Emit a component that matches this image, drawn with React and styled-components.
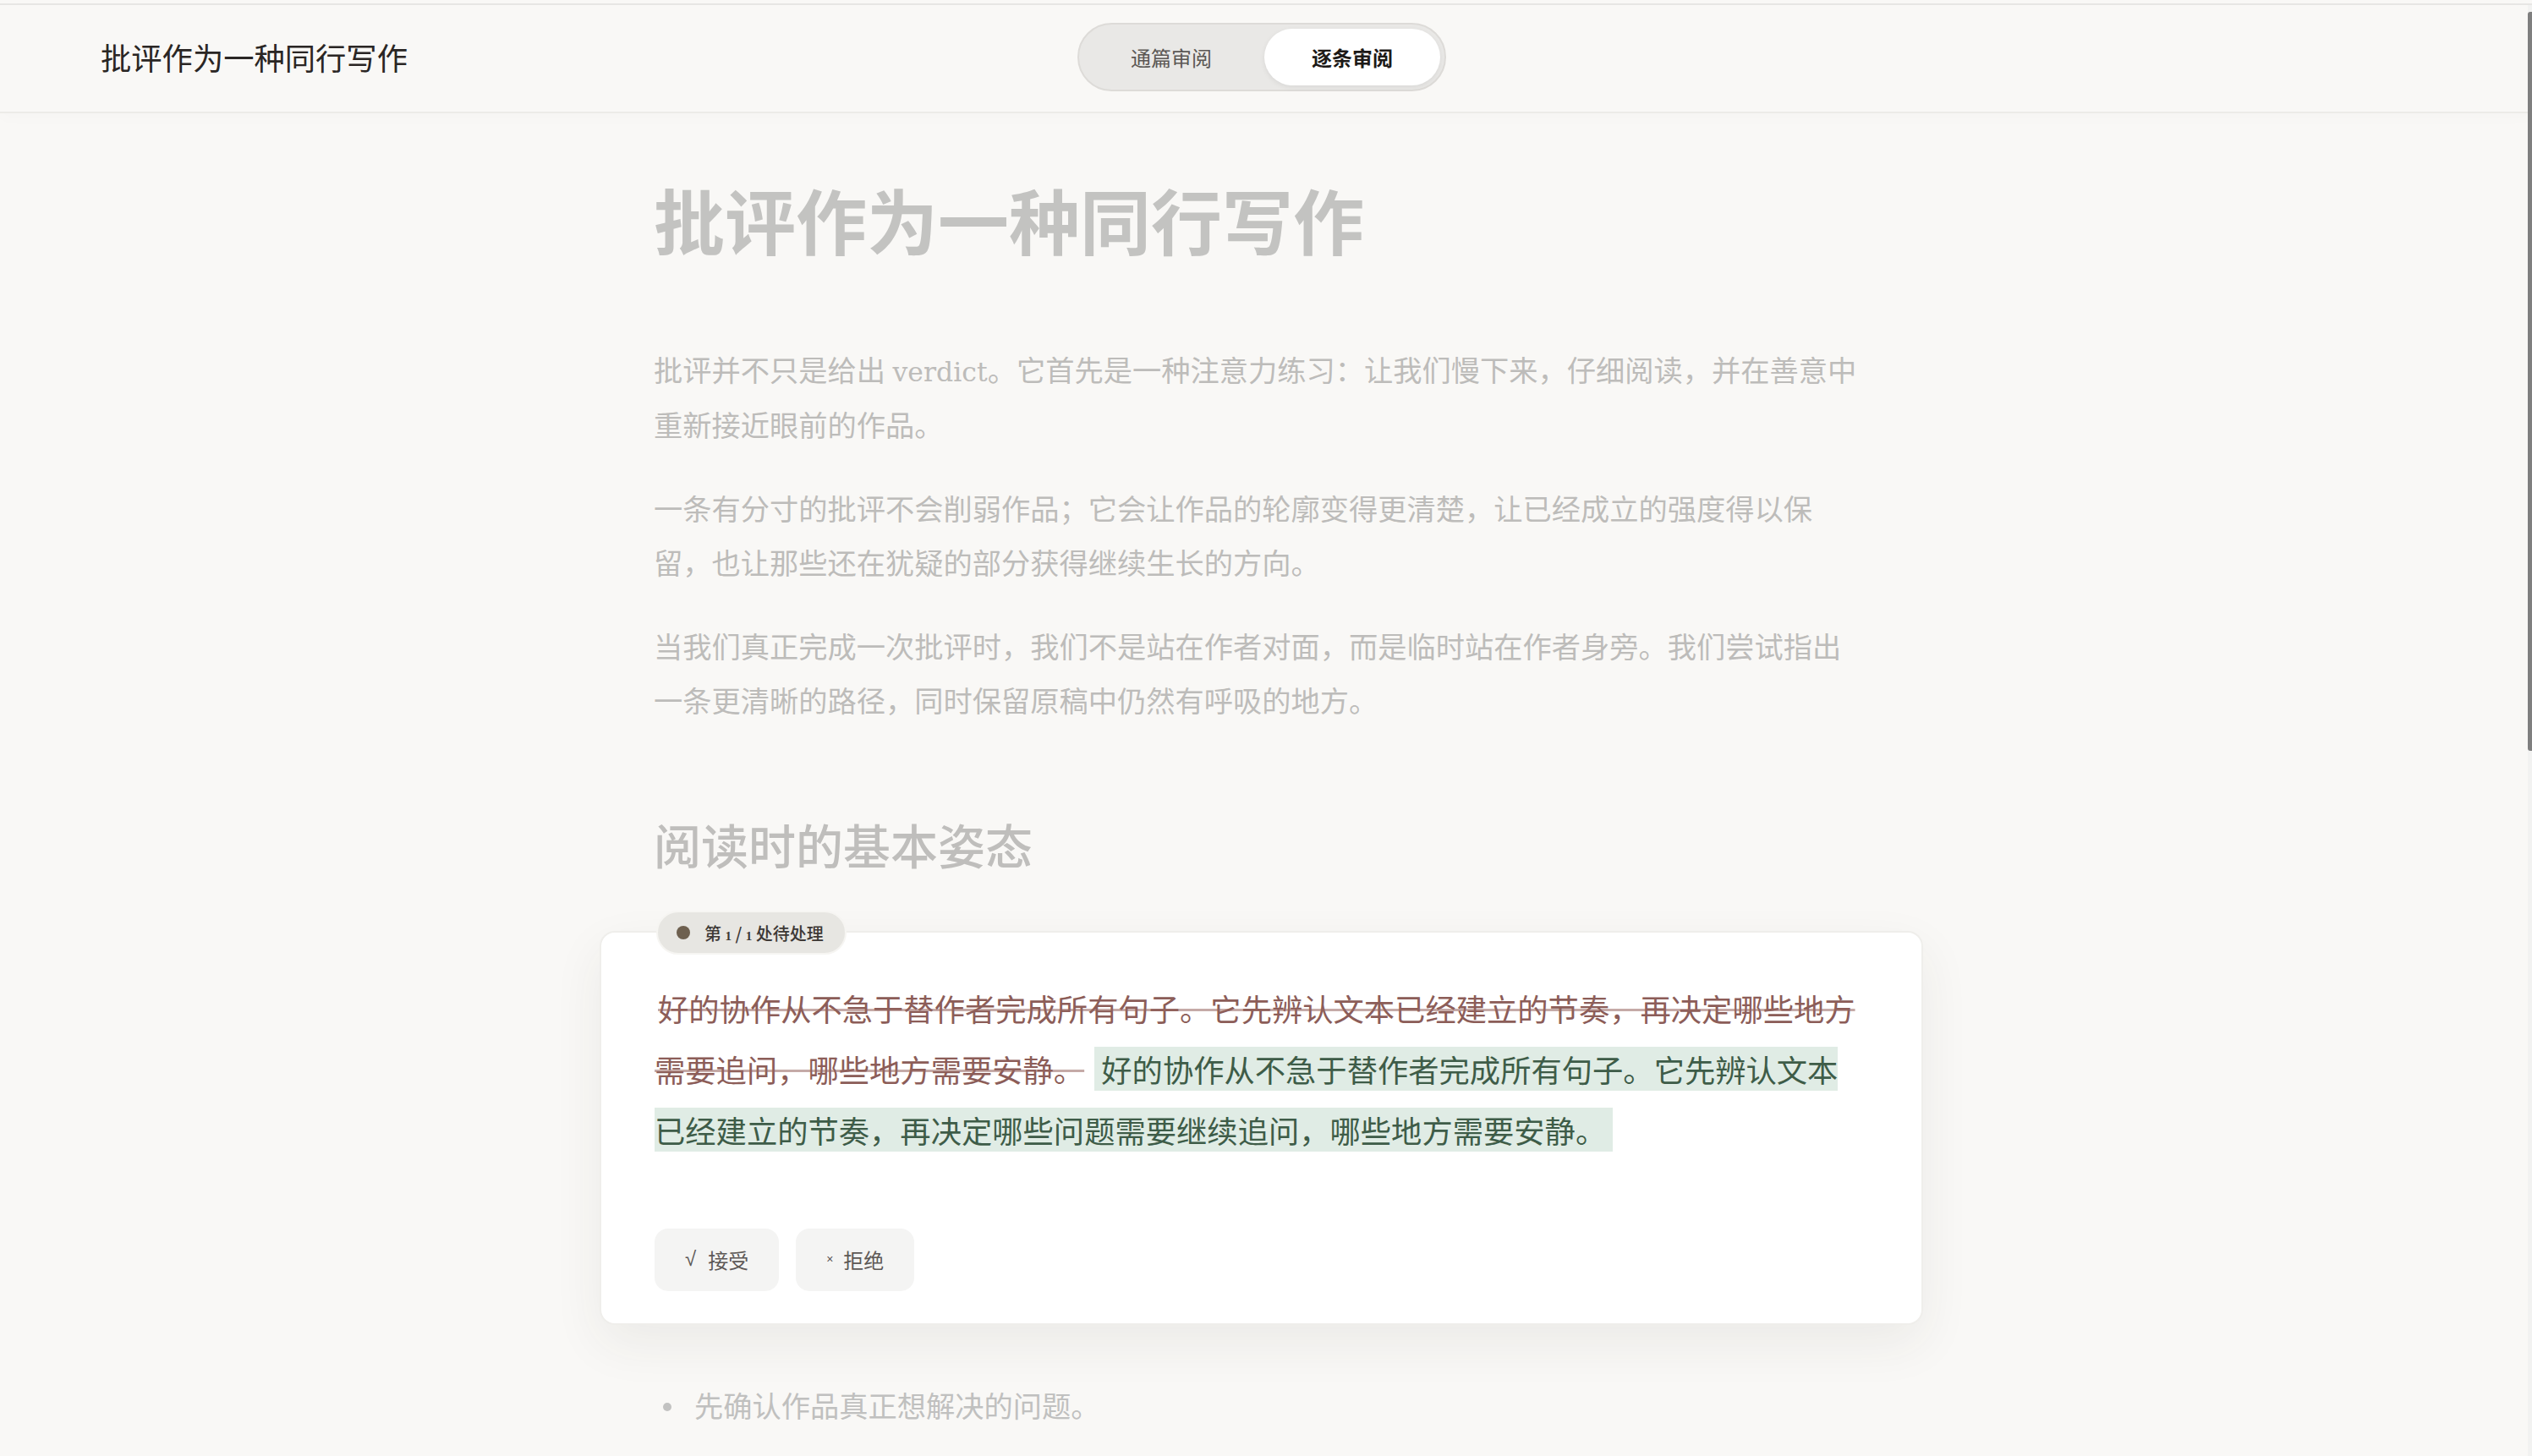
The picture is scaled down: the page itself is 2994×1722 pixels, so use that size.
import React from 'react';
import styled, { createGlobalStyle } from 'styled-components';

const GlobalStyle = createGlobalStyle`
  html, body {
    margin: 0;
    padding: 0;
    overflow: hidden;
    background: #f9f8f6;
  }
  * {
    box-sizing: border-box;
  }
`;

const serif = `"Liberation Serif", "Noto Sans CJK SC", serif`;
const sans = `"Noto Sans CJK SC", "Noto Sans", sans-serif`;

const Page = styled.div`
  height: 100vh;
  overflow: hidden;
  padding-top: 4px;
  background: #f9f8f6;
  font-family: ${serif};
`;

const Header = styled.header`
  display: grid;
  grid-template-columns: 1fr auto 1fr;
  align-items: center;
  height: 130px;
  padding: 0 10px 4px 0;
  border-top: 2px solid #e7e6e4;
  border-bottom: 2px solid #ecebe8;
  box-shadow: 0 6px 18px rgba(0, 0, 0, 0.015);
  background: #f9f8f6;
`;

const Brand = styled.div`
  padding-left: 119px;
  font-family: ${sans};
  font-size: 36.3px;
  color: #2a2624;
`;

const Toggle = styled.div`
  display: flex;
  gap: 6px;
  padding: 5px;
  border: 2px solid #dddbd8;
  border-radius: 42px;
  background: #e9e8e6;
`;

const Segment = styled.button`
  width: 208px;
  height: 67px;
  border: none;
  border-radius: 34px;
  font-family: ${sans};
  font-size: 24px;
  font-weight: ${(p) => (p.$active ? 700 : 400)};
  color: ${(p) => (p.$active ? '#1d1a18' : '#5b5754')};
  background: ${(p) => (p.$active ? '#ffffff' : 'transparent')};
  box-shadow: ${(p) => (p.$active ? '0 2px 6px rgba(0, 0, 0, 0.07)' : 'none')};
  cursor: pointer;
`;

const Main = styled.main`
  padding: 72px 14px 0 0;
`;

const Column = styled.article`
  width: 1434px;
  margin: 0 auto;
`;

const Title = styled.h1`
  margin: 0 0 96px;
  font-family: ${sans};
  font-size: 84px;
  line-height: 105px;
  font-weight: 700;
  color: #c3c3c1;
`;

const Para = styled.p`
  margin: 0;
  font-size: 34.25px;
  line-height: 64px;
  color: #bdbcba;

  & + & {
    margin-top: 35px;
  }
`;

const Latin = styled.span`
  font-family: "DejaVu Serif", serif;
  font-size: 31.5px;
`;

const SectionTitle = styled.h2`
  margin: 97px 0 0;
  font-family: ${sans};
  font-size: 56px;
  line-height: 78px;
  font-weight: 500;
  color: #bfbebc;
`;

const Card = styled.section`
  position: relative;
  margin: 64px -67px 0 -64px;
  padding: 53px 70px 38px 63px;
  border: 2px solid #efeeeb;
  border-radius: 18px;
  background: #ffffff;
  box-shadow: 0 22px 60px rgba(60, 50, 40, 0.07);
`;

const Badge = styled.div`
  position: absolute;
  top: -26px;
  left: 65px;
  display: flex;
  align-items: center;
  gap: 17px;
  height: 52px;
  padding: 0 25px 0 22px;
  border: 2px solid #f6f5f2;
  border-radius: 26px;
  background: #e7e6e2;
  font-family: ${sans};
  font-size: 20px;
  font-weight: 500;
  color: #3d3835;
`;

const Dot = styled.span`
  width: 16px;
  height: 16px;
  border-radius: 50%;
  background: #6e604f;
`;

const Num = styled.span`
  font-family: "Liberation Serif", serif;
  font-size: 15px;
  font-weight: 700;
`;

const Edit = styled.p`
  margin: 0;
  font-family: ${sans};
  font-size: 36.3px;
  line-height: 72px;
`;

const Removed = styled.del`
  padding: 0 4px;
  color: #8c5d58;
  text-decoration: line-through;
  text-decoration-color: rgba(150, 100, 95, 0.55);
  text-decoration-thickness: 3px;
`;

const Added = styled.ins`
  padding: 0 8px;
  color: #3e5c48;
  background: #e0ece5;
  text-decoration: none;
`;

const Actions = styled.div`
  display: flex;
  gap: 20px;
  margin-top: 81px;
`;

const ActionButton = styled.button`
  display: flex;
  align-items: center;
  height: 74px;
  padding: 0 36px 2px;
  border: none;
  border-radius: 16px;
  background: #f4f4f3;
  font-family: ${sans};
  font-size: 24px;
  color: #5d5856;
  cursor: pointer;
`;

const Mark = styled.span`
  margin-right: ${(p) => p.$gap}px;
  font-family: "Liberation Sans", sans-serif;
  font-size: ${(p) => p.$size}px;
  line-height: 1;
`;

const List = styled.ul`
  margin: 65px 0 0;
  padding: 0;
  list-style: none;
`;

const Item = styled.li`
  display: flex;
  align-items: center;
  gap: 27px;
  padding-left: 11px;
  font-size: 34.25px;
  line-height: 64px;
  color: #c0c0bf;
`;

const Bullet = styled.span`
  width: 10px;
  height: 10px;
  border-radius: 50%;
  background: #c2c2c1;
`;

const Track = styled.div`
  position: fixed;
  top: 6px;
  right: 0;
  bottom: 0;
  width: 5px;
  background: #f2f2f1;
`;

const Thumb = styled.div`
  position: absolute;
  top: 8px;
  left: 0;
  width: 5px;
  height: 874px;
  border-radius: 3px 0 0 3px;
  background: #7f7f7f;
`;

const App = () => {
  return (
    <Page>
      <GlobalStyle />
      <Header>
        <Brand>批评作为一种同行写作</Brand>
        <Toggle>
          <Segment>通篇审阅</Segment>
          <Segment $active>逐条审阅</Segment>
        </Toggle>
        <div />
      </Header>
      <Main>
        <Column>
          <Title>批评作为一种同行写作</Title>
          <Para>
            批评并不只是给出 <Latin>verdict</Latin>。它首先是一种注意力练习：让我们慢下来，仔细阅读，并在善意中重新接近眼前的作品。
          </Para>
          <Para>
            一条有分寸的批评不会削弱作品；它会让作品的轮廓变得更清楚，让已经成立的强度得以保留，也让那些还在犹疑的部分获得继续生长的方向。
          </Para>
          <Para>
            当我们真正完成一次批评时，我们不是站在作者对面，而是临时站在作者身旁。我们尝试指出一条更清晰的路径，同时保留原稿中仍然有呼吸的地方。
          </Para>
          <SectionTitle>阅读时的基本姿态</SectionTitle>
          <Card>
            <Badge>
              <Dot />
              <span>
                第 <Num>1</Num> / <Num>1</Num> 处待处理
              </span>
            </Badge>
            <Edit>
              <Removed>
                好的协作从不急于替作者完成所有句子。它先辨认文本已经建立的节奏，再决定哪些地方需要追问，哪些地方需要安静。
              </Removed>{' '}
              <Added>
                好的协作从不急于替作者完成所有句子。它先辨认文本已经建立的节奏，再决定哪些问题需要继续追问，哪些地方需要安静。
              </Added>
            </Edit>
            <Actions>
              <ActionButton>
                <Mark $gap={14} $size={24}>√</Mark>
                接受
              </ActionButton>
              <ActionButton>
                <Mark $gap={12} $size={14}>×</Mark>
                拒绝
              </ActionButton>
            </Actions>
          </Card>
          <List>
            <Item>
              <Bullet />
              先确认作品真正想解决的问题。
            </Item>
          </List>
        </Column>
      </Main>
      <Track>
        <Thumb />
      </Track>
    </Page>
  );
};

export default App;
